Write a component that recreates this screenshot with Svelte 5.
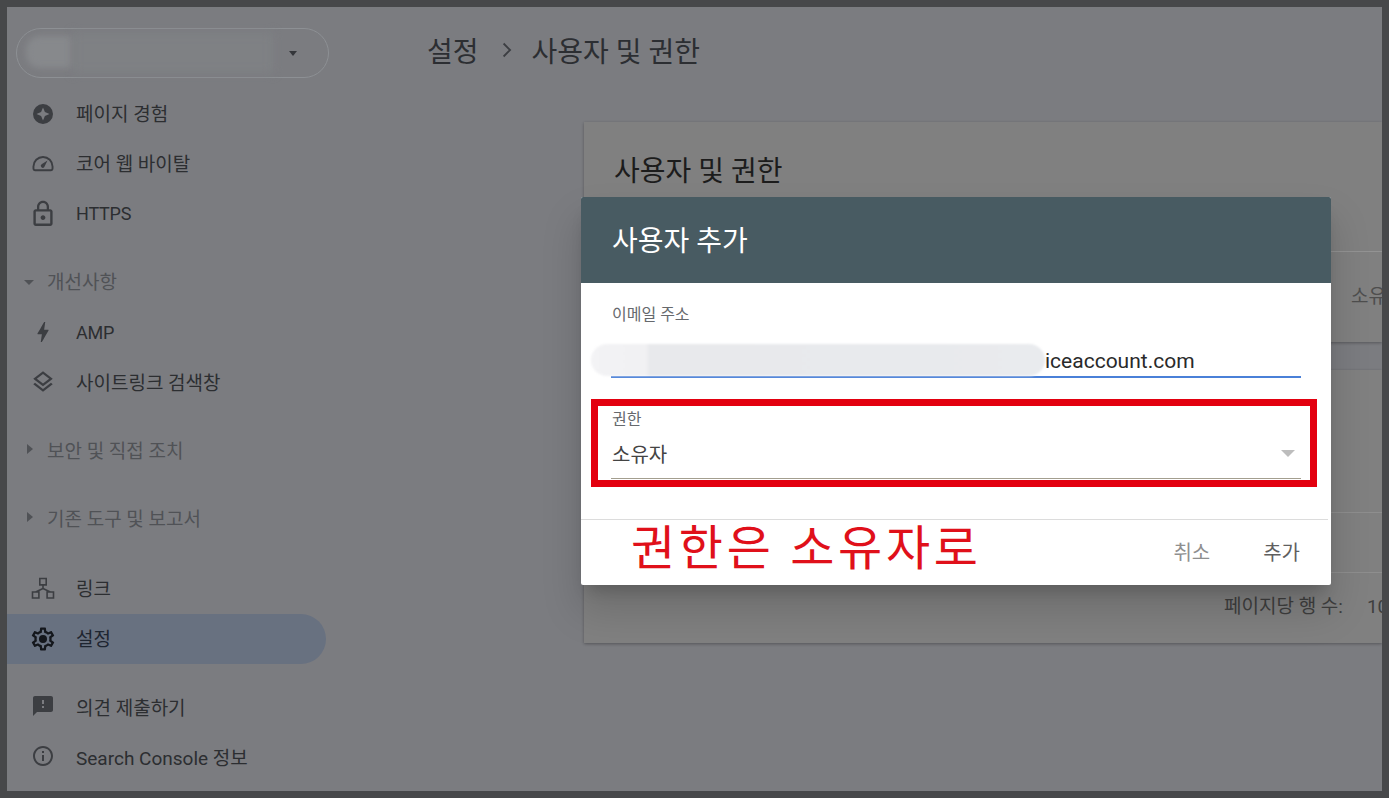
<script>
  const icons = {
    experience: { d: 'M12 2a10 10 0 1 0 0 20 10 10 0 0 0 0-20zM12 5.500l1.900 4.600L18.500 12l-4.600 1.900L12 18.500l-1.900-4.600L5.500 12l4.600-1.900z' },
    gauge: { d: 'M12 5a10.500 10.500 0 0 0-10.500 10.500v1.700c0 1.900 1.100 3 2.700 3h15.600c1.600 0 2.700-1.100 2.700-3v-1.700A10.500 10.500 0 0 0 12 5zm0 1.900a8.600 8.600 0 0 1 8.600 8.600v1.700c0 .8-.3 1.100-.8 1.100H4.200c-.5 0-.8-.3-.8-1.100v-1.700A8.600 8.600 0 0 1 12 6.900zM16.500 9.500l-5.900 3.800a1.900 1.900 0 1 0 2.700 2.600z' },
    lock: { d: 'M12 17c1.100 0 2-.9 2-2s-.9-2-2-2-2 .9-2 2 .9 2 2 2zm6-9h-1V6c0-2.760-2.240-5-5-5S7 3.240 7 6v2H6c-1.100 0-2 .9-2 2v10c0 1.100.9 2 2 2h12c1.100 0 2-.9 2-2V10c0-1.100-.9-2-2-2zM8.900 6c0-1.710 1.390-3.100 3.100-3.100s3.100 1.390 3.100 3.100v2H8.900V6zM18 20H6V10h12v10z' },
    bolt: { d: 'M11 21h-1l1-7H7.500c-.88 0-.33-.75-.31-.78C8.480 10.940 10.420 7.540 13.010 3h1l-1 7h3.510c.4 0 .62.19.4.66C12.970 17.550 11 21 11 21z' },
    layers: { d: 'M11.990 18.540l-7.370-5.730L3 14.070l9 7 9-7-1.630-1.270-7.380 5.740zM12 16l7.360-5.730L21 9l-9-7-9 7 1.630 1.270L12 16zm0-11.470L17.740 9 12 13.470 6.260 9 12 4.530z' },
    network: { stroke: true, d: 'M8.800 2.500h6.400v6.400H8.800zM1.500 16h6.400v6H1.500zM16.100 16h6.400v6h-6.400zM12 8.900v3.600M12 12.500l-7.300 3.500M12 12.500l7.300 3.500' },
    gear: { d: 'M19.430 12.980c.04-.32.07-.64.07-.98 0-.34-.03-.66-.07-.98l2.110-1.650c.19-.15.24-.42.12-.64l-2-3.460c-.09-.16-.26-.25-.44-.25-.06 0-.12.01-.17.03l-2.490 1c-.52-.4-1.080-.73-1.690-.98l-.38-2.650C14.460 2.180 14.250 2 14 2h-4c-.25 0-.46.18-.49.42l-.38 2.650c-.61.25-1.170.59-1.690.98l-2.490-1c-.06-.02-.12-.03-.18-.03-.17 0-.34.09-.43.25l-2 3.460c-.13.22-.07.49.12.64l2.110 1.650c-.04.32-.07.65-.07.98 0 .33.03.66.07.98l-2.110 1.650c-.19.15-.24.42-.12.64l2 3.460c.09.16.26.25.44.25.06 0 .12-.01.17-.03l2.490-1c.52.4 1.080.73 1.690.98l.38 2.650c.03.24.24.42.49.42h4c.25 0 .46-.18.49-.42l.38-2.650c.61-.25 1.170-.59 1.690-.98l2.490 1c.06.02.12.03.18.03.17 0 .34-.09.43-.25l2-3.460c.12-.22.07-.49-.12-.64l-2.110-1.650zm-1.980-1.710c.04.31.05.52.05.73 0 .21-.02.43-.05.73l-.14 1.130.89.7 1.080.84-.7 1.210-1.270-.51-1.040-.42-.9.68c-.43.32-.84.56-1.250.73l-1.060.43-.16 1.130-.2 1.350h-1.400l-.19-1.350-.16-1.130-1.060-.43c-.43-.18-.83-.41-1.230-.71l-.91-.7-1.060.43-1.270.51-.7-1.210 1.080-.84.89-.7-.14-1.130c-.03-.31-.05-.54-.05-.74s.02-.43.05-.73l.14-1.130-.89-.7-1.080-.84.7-1.210 1.270.51 1.040.42.9-.68c.43-.32.84-.56 1.250-.73l1.060-.43.16-1.130.2-1.350h1.390l.19 1.350.16 1.130 1.060.43c.43.18.83.41 1.230.71l.91.7 1.060-.43 1.270-.51.7 1.210-1.070.85-.89.7.14 1.130zM12 8.500a3.500 3.500 0 1 0 0 7 3.500 3.500 0 0 0 0-7z' },
    feedback: { d: 'M20 2H4c-1.100 0-1.990.9-1.990 2L2 22l4-4h14c1.100 0 2-.9 2-2V4c0-1.100-.9-2-2-2zm-7 12h-2v-2h2v2zm0-4h-2V6h2v4z' },
    info: { d: 'M11 7h2v2h-2zm0 4h2v6h-2zm1-9C6.480 2 2 6.480 2 12s4.480 10 10 10 10-4.480 10-10S17.520 2 12 2zm0 18c-4.410 0-8-3.590-8-8s3.590-8 8-8 8 3.590 8 8-3.590 8-8 8z' }
  };

  const groups = [
    { cls: 'g-top', items: [
      { label: '페이지 경험', icon: 'experience' },
      { label: '코어 웹 바이탈', icon: 'gauge' },
      { label: 'HTTPS', icon: 'lock', latin: true }
    ] },
    { cls: 'g-improve', head: '개선사항', open: true, items: [
      { label: 'AMP', icon: 'bolt', latin: true },
      { label: '사이트링크 검색창', icon: 'layers' }
    ] },
    { cls: 'g-security', head: '보안 및 직접 조치', items: [] },
    { cls: 'g-legacy', head: '기존 도구 및 보고서', items: [] },
    { cls: 'g-links', items: [
      { label: '링크', icon: 'network' },
      { label: '설정', icon: 'gear', active: true }
    ] },
    { cls: 'g-foot', items: [
      { label: '의견 제출하기', icon: 'feedback' },
      { label: 'Search Console 정보', icon: 'info' }
    ] }
  ];
</script>

<div class="frame">
  <div class="page">
    <aside class="sidebar">
      <div class="property">
        <span class="blur-a"></span>
        <span class="blur-b"></span>
        <span class="caret"></span>
      </div>
      {#each groups as g}
        <div class="group {g.cls}">
          {#if g.head}
            <div class="section">
              <span class={g.open ? 'tri-down' : 'tri-right'}></span>
              <span>{g.head}</span>
            </div>
          {/if}
          {#each g.items as item}
            <div class="item" class:active={item.active} class:latin={item.latin}>
              <svg class="icon ic-{item.icon}" class:stroked={icons[item.icon].stroke} viewBox="0 0 24 24" aria-hidden="true">
                <path fill-rule="evenodd" d={icons[item.icon].d} />
              </svg>
              <span class="item-text">{item.label}</span>
            </div>
          {/each}
        </div>
      {/each}
    </aside>

    <main class="main">
      <header class="crumbs">
        <span>설정</span>
        <svg class="chev" viewBox="0 0 24 24" aria-hidden="true"><path d="M8.600 5.500 15.100 12l-6.500 6.500" /></svg>
        <span>사용자 및 권한</span>
      </header>
      <section class="card first">
        <h2>사용자 및 권한</h2>
        <div class="row-owner">소유자</div>
      </section>
      <section class="card second">
        <div class="row"></div>
        <div class="row"></div>
        <div class="pager"><span>페이지당 행 수:</span><span class="num">10</span></div>
      </section>
    </main>
  </div>

  <div class="dialog">
    <div class="dlg-head">사용자 추가</div>
    <div class="dlg-body">
      <div class="field">
        <div class="label">이메일 주소</div>
        <div class="value email">
          <span class="email-blur"></span>
          <span class="email-text">iceaccount.com</span>
        </div>
      </div>
      <div class="field select">
        <div class="label">권한</div>
        <div class="value role">
          <span>소유자</span>
          <span class="sel-arrow"></span>
        </div>
      </div>
    </div>
    <div class="dlg-foot">
      <span class="btn">취소</span>
      <span class="btn add">추가</span>
    </div>
    <div class="red-box"></div>
    <div class="red-note">권한은 소유자로</div>
  </div>
</div>

<style>
  :global(body) {
    margin: 0;
    font-family: Roboto, "Noto Sans CJK KR", sans-serif;
  }
  .frame {
    position: relative;
    box-sizing: border-box;
    width: 1389px;
    height: 798px;
    padding: 7px;
    background: #47484a;
    overflow: hidden;
  }
  .page {
    display: flex;
    height: 100%;
    background: #7b7c80;
    overflow: hidden;
  }
  .sidebar {
    flex: 0 0 333px;
    box-sizing: border-box;
    padding-top: 21px;
    color: #2c2e31;
    font-size: 19px;
  }
  .property {
    position: relative;
    box-sizing: border-box;
    width: 313px;
    height: 50px;
    margin-left: 9px;
    border: 1px solid #8d9094;
    border-radius: 25px;
    margin-bottom: 10px;
  }
  .blur-a {
    position: absolute;
    left: 9px;
    top: 7px;
    width: 46px;
    height: 32px;
    border-radius: 14px 4px 4px 14px;
    background: #87898c;
    filter: blur(3px);
  }
  .blur-b {
    position: absolute;
    left: 56px;
    top: 4px;
    width: 200px;
    height: 40px;
    background: #7f8184;
    filter: blur(5px);
  }
  .caret {
    position: absolute;
    left: 272px;
    top: 22px;
    border: 4px solid transparent;
    border-top: 5px solid #34363a;
    border-bottom: 0;
  }
  .g-improve { margin-top: 17px; }
  .g-improve .section { margin-bottom: 2px; }
  .g-security { margin-top: 17px; }
  .g-legacy { margin-top: 18px; }
  .g-links { margin-top: 21px; }
  .g-foot { margin-top: 17px; }
  .section {
    display: flex;
    align-items: center;
    height: 50px;
    color: #505256;
    position: relative;
    padding-left: 40px;
  }
  .tri-down, .tri-right {
    position: absolute;
    width: 0;
    height: 0;
  }
  .tri-down {
    left: 17px;
    top: 25px;
    border: 5px solid transparent;
    border-top: 5px solid #505256;
    border-bottom: 0;
  }
  .tri-right {
    left: 20px;
    top: 20px;
    border: 5px solid transparent;
    border-left: 6px solid #505256;
    border-right: 0;
  }
  .item {
    display: flex;
    align-items: center;
    height: 50px;
    padding-left: 24px;
    width: 319px;
    box-sizing: border-box;
    border-radius: 0 25px 25px 0;
  }
  .item-text { margin-bottom: 2px; }
  .g-foot .item-text, .item.latin .item-text { margin-bottom: 0; }
  .item.active .item-text { margin-bottom: 3px; }
  .item.latin {
    font-size: 18px;
    letter-spacing: -0.2px;
  }
  .item.active {
    margin-top: 1px;
    background: #687180;
    color: #1e2530;
  }
  .icon {
    flex: none;
    width: 24px;
    height: 24px;
    margin-right: 21px;
    fill: #3c3e42;
  }
  .ic-experience, .ic-lock { margin-top: 2px; }
  .ic-lock { transform: scale(1.2); }
  .ic-gear { transform: scale(1.15); }
  .ic-bolt { transform: scale(1.12); }
  .ic-layers { transform: scale(1.08); }
  .item.active .icon { fill: #14171c; }
  .icon.stroked {
    fill: none;
    stroke: #3c3e42;
    stroke-width: 1.6;
  }
  .main {
    flex: 1;
    min-width: 0;
  }
  .crumbs {
    display: flex;
    align-items: center;
    height: 44px;
    margin: 21px 0 50px 87px;
    font-size: 28px;
    color: #2c2e32;
  }
  .chev {
    width: 24px;
    height: 24px;
    margin: 0 13px 0 16px;
    fill: none;
    stroke: #3c3e42;
    stroke-width: 1.8;
  }
  .card {
    margin-left: 244px;
    background: #808080;
    box-shadow: 0 1px 3px rgba(0, 0, 0, 0.3);
    overflow: hidden;
    white-space: nowrap;
  }
  .first {
    box-sizing: border-box;
    height: 220px;
    margin-bottom: 28px;
  }
  .first h2 {
    box-sizing: border-box;
    height: 130px;
    margin: 0;
    padding: 32px 0 0 30px;
    border-bottom: 1px solid #939393;
    font-size: 28px;
    font-weight: 400;
    line-height: 36px;
    color: #1c1c1c;
  }
  .row-owner {
    padding: 32px 0 0 767px;
    font-size: 19px;
    line-height: 26px;
    color: #4e4e4e;
  }
  .second {
    box-sizing: border-box;
    height: 273px;
    padding-top: 83px;
  }
  .row {
    height: 60px;
    border-bottom: 1px solid #8e8e8e;
    box-sizing: border-box;
  }
  .pager {
    padding: 22px 0 0 640px;
    font-size: 19px;
    line-height: 24px;
    color: #3e3e3e;
  }
  .pager .num { margin-left: 24px; }

  .dialog {
    position: absolute;
    left: 581px;
    top: 197px;
    width: 750px;
    height: 388px;
    background: #fff;
    border-radius: 2px;
    box-shadow: 0 11px 15px -7px rgba(0, 0, 0, 0.2), 0 24px 38px 3px rgba(0, 0, 0, 0.14);
  }
  .dlg-head {
    box-sizing: border-box;
    height: 86px;
    padding: 4px 0 0 31px;
    background: #485b62;
    color: #fff;
    font-size: 28px;
    line-height: 82px;
    border-radius: 2px 2px 0 0;
  }
  .dlg-body {
    box-sizing: border-box;
    height: 236px;
    padding: 22px 30px 0;
  }
  .field { position: relative; }
  .label {
    height: 18px;
    padding-left: 1px;
    font-size: 16px;
    line-height: 20px;
    color: #66696d;
  }
  .value {
    display: flex;
    align-items: center;
    position: relative;
    color: #444;
  }
  .email {
    margin-top: 21px;
    padding-left: 434px;
    border-bottom: 2px solid #4a80d8;
    height: 32px;
  }
  .email-blur {
    position: absolute;
    left: -20px;
    top: 0;
    width: 454px;
    height: 32px;
    border-radius: 16px;
    background: linear-gradient(90deg, #f3f3f5 0, #f1f1f3 12%, #e8e9ec 13%, #e9ebee 100%);
    filter: blur(1px);
  }
  .email-text {
    position: relative;
    font-size: 21px;
    color: #2a2a2a;
    top: 1px;
  }
  .select { margin-top: 32px; }
  .role {
    justify-content: space-between;
    height: 50px;
    padding-left: 1px;
    font-size: 20px;
    border-bottom: 1px solid #a39e8f;
  }
  .sel-arrow {
    margin-right: 6px;
    border: 7px solid transparent;
    border-top: 7px solid #bdbdbd;
    border-bottom: 0;
  }
  .dlg-foot {
    display: flex;
    justify-content: flex-end;
    align-items: center;
    gap: 53px;
    height: 66px;
    margin-right: 3px;
    padding: 0 28px 2px 0;
    box-sizing: border-box;
    border-top: 1px solid #dcdcdc;
    font-size: 20px;
    color: #8f8f8f;
  }
  .btn.add { color: #5f5f5f; }
  .red-box {
    position: absolute;
    left: 10px;
    top: 202px;
    box-sizing: border-box;
    width: 726px;
    height: 88px;
    border: 7px solid #e3000f;
  }
  .red-note {
    position: absolute;
    left: 50px;
    top: 322px;
    font-size: 48px;
    letter-spacing: 3.7px;
    line-height: 60px;
    color: #e0101a;
    white-space: nowrap;
  }
</style>
